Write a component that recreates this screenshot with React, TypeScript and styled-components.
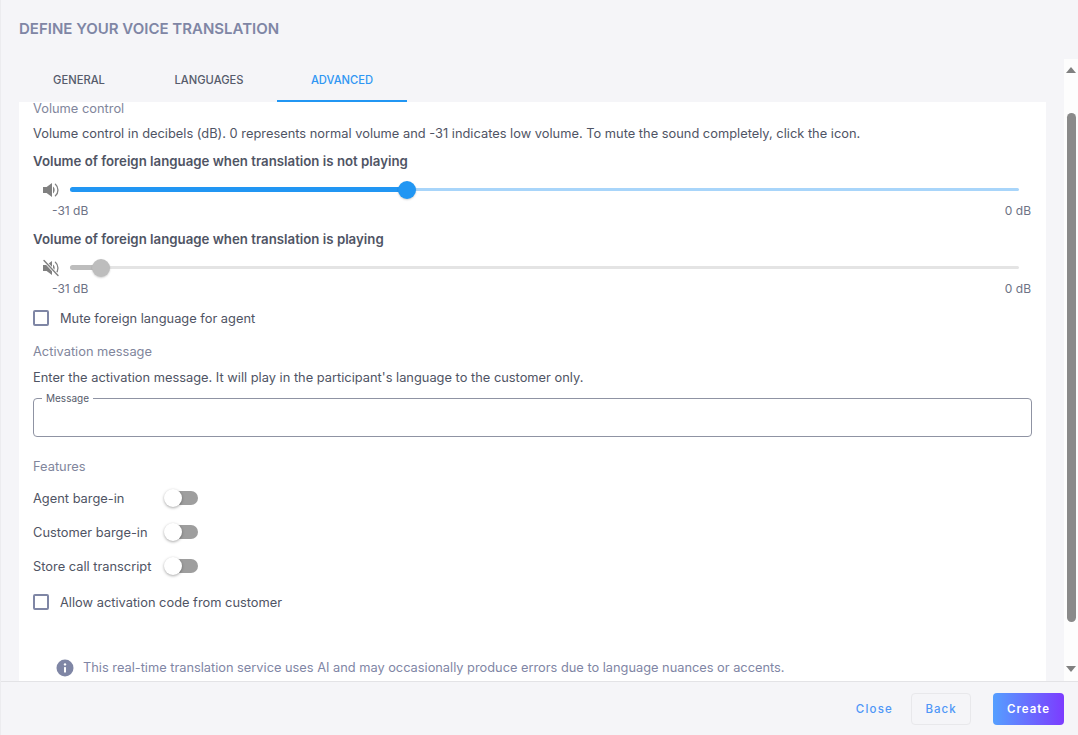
import React from 'react';
import styled, { createGlobalStyle } from 'styled-components';

const GlobalStyle = createGlobalStyle`
  html, body {
    margin: 0;
    padding: 0;
    height: 100%;
    overflow: hidden;
    background: #f5f5f8;
    font-family: Inter, "Liberation Sans", sans-serif;
  }
`;

const Dialog = styled.div`
  width: 1078px;
  height: 735px;
  display: flex;
  flex-direction: column;
  background: #f5f5f8;
  border-left: 1px solid #ececef;
  box-sizing: border-box;
`;

const Title = styled.h1`
  margin: 0;
  height: 59px;
  padding: 20px 0 0 18px;
  box-sizing: border-box;
  font-size: 15px;
  line-height: 18px;
  font-weight: 600;
  color: #7f86a5;
`;

const Body = styled.div`
  flex: 1;
  min-height: 0;
  display: flex;
`;

const Main = styled.div`
  width: 1027px;
  margin-left: 18px;
  display: flex;
  flex-direction: column;
`;

const Tabs = styled.div`
  height: 43px;
  display: flex;
  margin-left: -6px;
`;

const Tab = styled.div<{ $active?: boolean; $width: number }>`
  width: ${(p) => p.$width}px;
  box-sizing: border-box;
  padding-top: 14px;
  text-align: center;
  font-size: 11.2px;
  line-height: 14px;
  font-weight: 500;
  color: ${(p) => (p.$active ? '#2f96f3' : '#565b6b')};
  border-bottom: 2px solid ${(p) => (p.$active ? '#2196f3' : 'transparent')};
`;

const Panel = styled.div`
  flex: 1;
  background: #fff;
  padding: 1px 14px 0;
  overflow: hidden;
`;

const SectionLabel = styled.div<{ $top?: number }>`
  margin-top: ${(p) => p.$top ?? 0}px;
  font-size: 12.85px;
  line-height: 12px;
  color: #81869c;
`;

const Description = styled.div<{ $top: number }>`
  margin-top: ${(p) => p.$top}px;
  font-size: 12.85px;
  line-height: 16px;
  color: #4f5464;
`;

const SliderTitle = styled.div<{ $top: number }>`
  margin-top: ${(p) => p.$top}px;
  font-size: 13.25px;
  line-height: 16px;
  font-weight: 600;
  color: #4f5464;
`;

const SliderRow = styled.div<{ $top: number }>`
  margin-top: ${(p) => p.$top}px;
  height: 20px;
  display: flex;
  align-items: center;
  padding-left: 9px;
`;

const VolumeIcon = styled.svg`
  width: 18px;
  height: 18px;
  margin-top: 1px;
  flex: none;
  color: #808080;
`;

const Track = styled.div<{ $color: string }>`
  position: relative;
  margin-left: 10px;
  width: 949px;
  height: 3px;
  border-radius: 2px;
  background: ${(p) => p.$color};
`;

const TrackFill = styled.div<{ $color: string }>`
  position: absolute;
  top: -1px;
  left: 0;
  height: 5px;
  border-radius: 3px;
  background: ${(p) => p.$color};
`;

const Thumb = styled.div<{ $color: string }>`
  position: absolute;
  top: -7px;
  width: 18px;
  height: 18px;
  margin-left: -9px;
  border-radius: 50%;
  background: ${(p) => p.$color};
  box-shadow: 0 1px 2px rgba(0, 0, 0, 0.18);
`;

const SliderScale = styled.div`
  margin-top: 5px;
  display: flex;
  justify-content: space-between;
  padding: 0 1px 0 19px;
  font-size: 12px;
  line-height: 14px;
  color: #6d7285;
`;

const CheckRow = styled.label<{ $top: number }>`
  margin-top: ${(p) => p.$top}px;
  display: flex;
  align-items: center;
  height: 18px;
  gap: 11px;
  font-size: 12.85px;
  color: #4f5464;
`;

const CheckBox = styled.span`
  width: 16px;
  height: 16px;
  box-sizing: border-box;
  border: 2px solid #7f86a5;
  border-radius: 2px;
  flex: none;
`;

const MessageField = styled.fieldset`
  margin: 6px 0 0;
  padding: 0 0 0 8px;
  width: 999px;
  height: 45px;
  box-sizing: border-box;
  border: 1px solid #8f93a3;
  border-radius: 4px;
`;

const MessageLegend = styled.legend`
  padding: 0 4px;
  font-size: 10px;
  line-height: 12px;
  color: #565b6b;
`;

const ToggleRow = styled.div<{ $top: number }>`
  margin-top: ${(p) => p.$top}px;
  height: 18px;
  display: flex;
  align-items: center;
  font-size: 12.85px;
  color: #4f5464;
`;

const ToggleLabel = styled.span`
  width: 131px;
`;

const Toggle = styled.span`
  position: relative;
  display: block;
  width: 34px;
  height: 14px;
`;

const ToggleTrack = styled.span`
  position: absolute;
  left: 6px;
  right: 0;
  top: 0;
  bottom: 0;
  border-radius: 7px;
  background: #9e9e9e;
`;

const ToggleKnob = styled.span`
  position: absolute;
  left: 0;
  top: -2px;
  width: 18px;
  height: 18px;
  border-radius: 50%;
  background: #fff;
  box-shadow: 0 1px 3px rgba(0, 0, 0, 0.35);
`;

const Notice = styled.div`
  margin-top: 48px;
  padding-left: 23px;
  display: flex;
  align-items: center;
  gap: 9px;
  font-size: 12.8px;
  line-height: 18px;
  color: #7f86a5;
`;

const InfoIcon = styled.svg`
  width: 18px;
  height: 18px;
  flex: none;
`;

const ScrollTrack = styled.div`
  width: 14px;
  margin-left: 18px;
  position: relative;
  background: #fdfdfd;
  display: flex;
  flex-direction: column;
  align-items: center;
  justify-content: space-between;
  padding: 8px 0 9px;
  box-sizing: border-box;
`;

const ScrollArrow = styled.div<{ $down?: boolean }>`
  width: 0;
  height: 0;
  border-left: 5px solid transparent;
  border-right: 5px solid transparent;
  ${(p) => (p.$down ? 'border-top: 6px solid #808080;' : 'border-bottom: 6px solid #808080;')}
`;

const ScrollThumb = styled.div`
  position: absolute;
  top: 54px;
  left: 3px;
  width: 9px;
  height: 509px;
  border-radius: 5px;
  background: #8a8a8a;
`;

const Footer = styled.div`
  height: 54px;
  box-sizing: border-box;
  border-top: 1px solid #e3e3e6;
  display: flex;
  align-items: center;
  justify-content: flex-end;
  padding: 0 14px 0 0;
  font-size: 11.5px;
`;

const TextButton = styled.button`
  margin-right: 18px;
  padding: 0;
  border: 0;
  background: none;
  font: inherit;
  font-weight: 500;
  letter-spacing: 1.2px;
  color: #4f97f7;
`;

const OutlineButton = styled.button`
  width: 60px;
  height: 32px;
  margin-right: 22px;
  padding: 0;
  border: 1px solid #e8e8eb;
  border-radius: 4px;
  background: #f5f5f8;
  font: inherit;
  font-weight: 500;
  letter-spacing: 1px;
  color: #4f97f7;
`;

const PrimaryButton = styled.button`
  width: 71px;
  height: 32px;
  padding: 0;
  border: 0;
  border-radius: 4px;
  background: linear-gradient(90deg, #559fff 0%, #7c3cff 100%);
  font: inherit;
  font-weight: 600;
  letter-spacing: 1px;
  color: #fff;
`;

const SpeakerOn = () => (
  <VolumeIcon viewBox="0 0 18 18" fill="currentColor">
    <path d="M1 6h3.6L10 2v14l-5.4-4H1z" />
    <path d="M11 5.6c2.2 1.4 2.2 5.4 0 6.8z" />
    <path d="M13.4 3.2c3.4 2.8 3.4 8.8 0 11.6" fill="none" stroke="currentColor" strokeWidth="1.3" strokeLinecap="round" />
  </VolumeIcon>
);

const SpeakerMuted = () => (
  <VolumeIcon viewBox="0 0 18 18" fill="currentColor">
    <path d="M1 6h3.6L10 2v14l-5.4-4H1z" />
    <path d="M11 5.6c2.2 1.4 2.2 5.4 0 6.8z" />
    <path d="M13.4 3.2c3.4 2.8 3.4 8.8 0 11.6" fill="none" stroke="currentColor" strokeWidth="1.3" strokeLinecap="round" />
    <path d="M2 1.5l14 15" fill="none" stroke="#fff" strokeWidth="3" />
    <path d="M2 1.5l14 15" fill="none" stroke="currentColor" strokeWidth="1.4" strokeLinecap="round" />
  </VolumeIcon>
);

interface IVolumeSlider {
  muted?: boolean;
  percent: number;
  top: number;
}

const VolumeSlider = ({ muted, percent, top }: IVolumeSlider) => (
  <>
    <SliderRow $top={top}>
      {muted ? <SpeakerMuted /> : <SpeakerOn />}
      <Track $color={muted ? '#e4e4e4' : '#a8d5fa'}>
        <TrackFill $color={muted ? '#bdbdbd' : '#2196f3'} style={{ width: `${percent}%` }} />
        <Thumb $color={muted ? '#bdbdbd' : '#2196f3'} style={{ left: `${percent}%` }} />
      </Track>
    </SliderRow>
    <SliderScale>
      <span>-31 dB</span>
      <span>0 dB</span>
    </SliderScale>
  </>
);

const SwitchRow = ({ label, top }: { label: string; top: number }) => (
  <ToggleRow $top={top}>
    <ToggleLabel>{label}</ToggleLabel>
    <Toggle>
      <ToggleTrack />
      <ToggleKnob />
    </Toggle>
  </ToggleRow>
);

const App = () => (
  <Dialog>
    <GlobalStyle />
    <Title>DEFINE YOUR VOICE TRANSLATION</Title>
    <Body>
      <Main>
        <Tabs>
          <Tab $width={132}>GENERAL</Tab>
          <Tab $width={128}>LANGUAGES</Tab>
          <Tab $width={4} />
          <Tab $width={130} $active>ADVANCED</Tab>
        </Tabs>
        <Panel>
          <SectionLabel>Volume control</SectionLabel>
          <Description $top={11}>Volume control in decibels (dB). 0 represents normal volume and -31 indicates low volume. To mute the sound completely, click the icon.</Description>
          <SliderTitle $top={11}>Volume of foreign language when translation is not playing</SliderTitle>
          <VolumeSlider percent={35.5} top={10} />
          <SliderTitle $top={13}>Volume of foreign language when translation is playing</SliderTitle>
          <VolumeSlider muted percent={3.25} top={10} />
          <CheckRow $top={13}>
            <CheckBox />
            Mute foreign language for agent
          </CheckRow>
          <SectionLabel $top={19}>Activation message</SectionLabel>
          <Description $top={12}>Enter the activation message. It will play in the participant's language to the customer only.</Description>
          <MessageField>
            <MessageLegend>Message</MessageLegend>
          </MessageField>
          <SectionLabel $top={24}>Features</SectionLabel>
          <SwitchRow label="Agent barge-in" top={16} />
          <SwitchRow label="Customer barge-in" top={16} />
          <SwitchRow label="Store call transcript" top={16} />
          <CheckRow $top={18}>
            <CheckBox />
            Allow activation code from customer
          </CheckRow>
          <Notice>
            <InfoIcon viewBox="0 0 18 18">
              <circle cx="9" cy="9" r="8.5" fill="#7f86a5" />
              <rect x="8" y="8" width="2" height="5.5" rx="0.6" fill="#fff" />
              <circle cx="9" cy="5.4" r="1.2" fill="#fff" />
            </InfoIcon>
            This real-time translation service uses AI and may occasionally produce errors due to language nuances or accents.
          </Notice>
        </Panel>
      </Main>
      <ScrollTrack>
        <ScrollArrow />
        <ScrollThumb />
        <ScrollArrow $down />
      </ScrollTrack>
    </Body>
    <Footer>
      <TextButton>Close</TextButton>
      <OutlineButton>Back</OutlineButton>
      <PrimaryButton>Create</PrimaryButton>
    </Footer>
  </Dialog>
);

export default App;
